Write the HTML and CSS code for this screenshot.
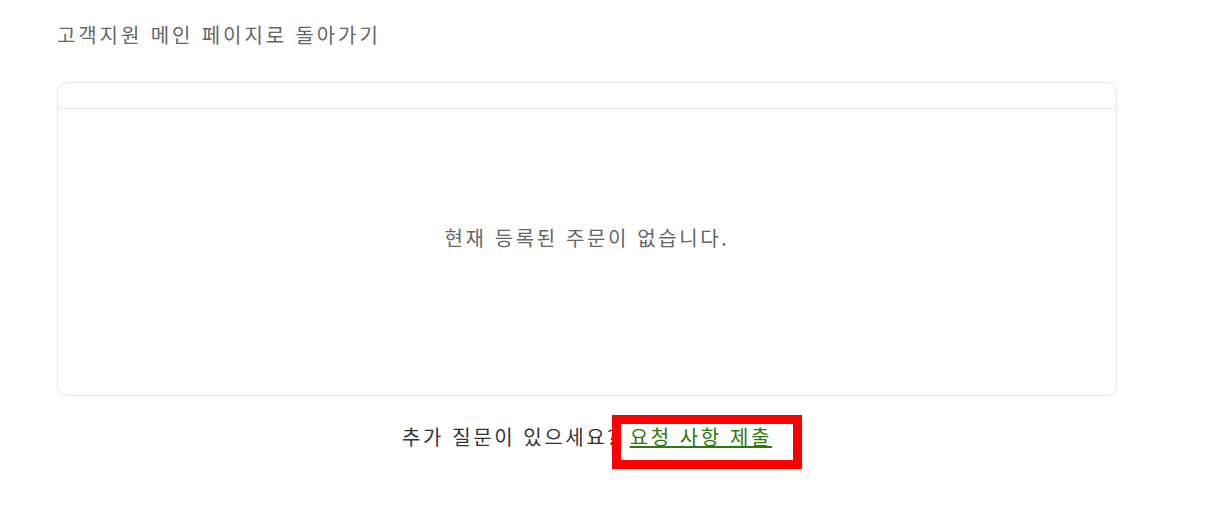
FILE: index.html
```html
<!DOCTYPE html>
<html lang="ko">
<head>
<meta charset="utf-8">
<title>주문</title>
<link rel="stylesheet" href="styles.css">
</head>
<body>
<div class="page">
  <a class="back" href="#">고객지원 메인 페이지로 돌아가기</a>
  <div class="card">
    <div class="card-head"></div>
    <div class="card-body">
      <p class="empty">현재 등록된 주문이 없습니다.</p>
    </div>
  </div>
  <p class="more">추가 질문이 있으세요? <a class="request" href="#">요청 사항 제출</a></p>
</div>
</body>
</html>
```
FILE: styles.css
```css
html, body {
  margin: 0;
  padding: 0;
  background: #fff;
}
body {
  font-family: "Noto Sans CJK KR", "Noto Sans", sans-serif;
  letter-spacing: 2.6px;
}
.page {
  width: 1060px;
  padding: 21px 0 76px 57px;
}
.back {
  display: block;
  font-size: 20px;
  line-height: 28px;
  letter-spacing: 2.9px;
  color: #666;
  text-decoration: none;
}
.card {
  margin-top: 33px;
  border: 1px solid #e6e6e6;
  border-radius: 10px;
}
.card-head {
  height: 25px;
  border-bottom: 1px solid #e6e6e6;
}
.card-body {
  height: 286px;
  display: flex;
  justify-content: center;
  padding-top: 115px;
  box-sizing: border-box;
}
.empty {
  margin: 0;
  font-size: 20px;
  line-height: 28px;
  color: #666;
}
.more {
  margin: 27px 0 0;
  text-align: center;
  font-size: 20px;
  line-height: 28px;
  color: #333;
}
.request {
  position: relative;
  display: inline-block;
  margin-left: 2px;
  color: #2b7a0b;
  text-decoration: underline;
}
.request::after {
  content: "";
  position: absolute;
  left: -18px;
  right: -30px;
  top: -8px;
  bottom: -18px;
  border: 9px solid #ff0000;
}
```
